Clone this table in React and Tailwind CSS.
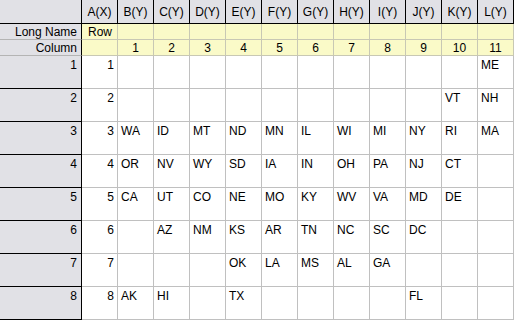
export default function App() {
  const cols = ["A(X)", "B(Y)", "C(Y)", "D(Y)", "E(Y)", "F(Y)", "G(Y)", "H(Y)", "I(Y)", "J(Y)", "K(Y)", "L(Y)"];
  const data = [
    ["", "", "", "", "", "", "", "", "", "", "ME"],
    ["", "", "", "", "", "", "", "", "", "VT", "NH"],
    ["WA", "ID", "MT", "ND", "MN", "IL", "WI", "MI", "NY", "RI", "MA"],
    ["OR", "NV", "WY", "SD", "IA", "IN", "OH", "PA", "NJ", "CT", ""],
    ["CA", "UT", "CO", "NE", "MO", "KY", "WV", "VA", "MD", "DE", ""],
    ["", "AZ", "NM", "KS", "AR", "TN", "NC", "SC", "DC", "", ""],
    ["", "", "", "OK", "LA", "MS", "AL", "GA", "", "", ""],
    ["AK", "HI", "", "TX", "", "", "", "", "FL", "", ""],
  ];
  const font = { fontFamily: '"Liberation Sans", Arial, sans-serif' };
  return (
    <div className="w-[514px] h-[320px] overflow-hidden bg-white text-[12px] leading-[14px] text-black" style={font}>
      <div className="grid grid-cols-[82px_repeat(12,36px)] grid-rows-[24px_16px_16px_repeat(8,33px)]">
        {/* header row */}
        <div className="bg-[#e1e1e6] border-r border-b border-black"></div>
        {cols.map((c) => (
          <div key={c} className="bg-[#e1e1e6] border-r border-b border-black flex items-center justify-center">
            {c}
          </div>
        ))}
        {/* long name row */}
        <div className="bg-[#e1e1e6] border-r border-r-black border-b border-b-[#b4b4b4] flex items-center justify-end pr-[4px]">
          Long Name
        </div>
        <div className="bg-[#fafac8] border-r border-b border-[#c8c8b4] flex items-center pl-[6px]">Row</div>
        {cols.slice(1).map((c) => (
          <div key={c} className="bg-[#fafac8] border-r border-b border-[#c8c8b4]"></div>
        ))}
        {/* column row */}
        <div className="bg-[#e1e1e6] border-r border-r-black border-b border-b-[#b4b4b4] flex items-center justify-end pr-[4px]">
          Column
        </div>
        <div className="bg-[#fafac8] border-r border-b border-[#c8c8b4]"></div>
        {cols.slice(1).map((c, i) => (
          <div key={c} className="bg-[#fafac8] border-r border-b border-[#c8c8b4] flex items-center justify-center">
            {i + 1}
          </div>
        ))}
        {/* data rows */}
        {data.map((row, r) => (
          <div key={r} className="contents">
            <div className="bg-[#e1e1e6] border-r border-b border-black text-right pr-[4px] pt-[2px]">{r + 1}</div>
            <div className="bg-white border-r border-b border-[#c0c0c0] text-right pr-[3px] pt-[2px]">{r + 1}</div>
            {row.map((v, c) => (
              <div key={c} className="bg-white border-r border-b border-[#c0c0c0] pl-[3px] pt-[2px]">
                {v}
              </div>
            ))}
          </div>
        ))}
      </div>
    </div>
  );
}
